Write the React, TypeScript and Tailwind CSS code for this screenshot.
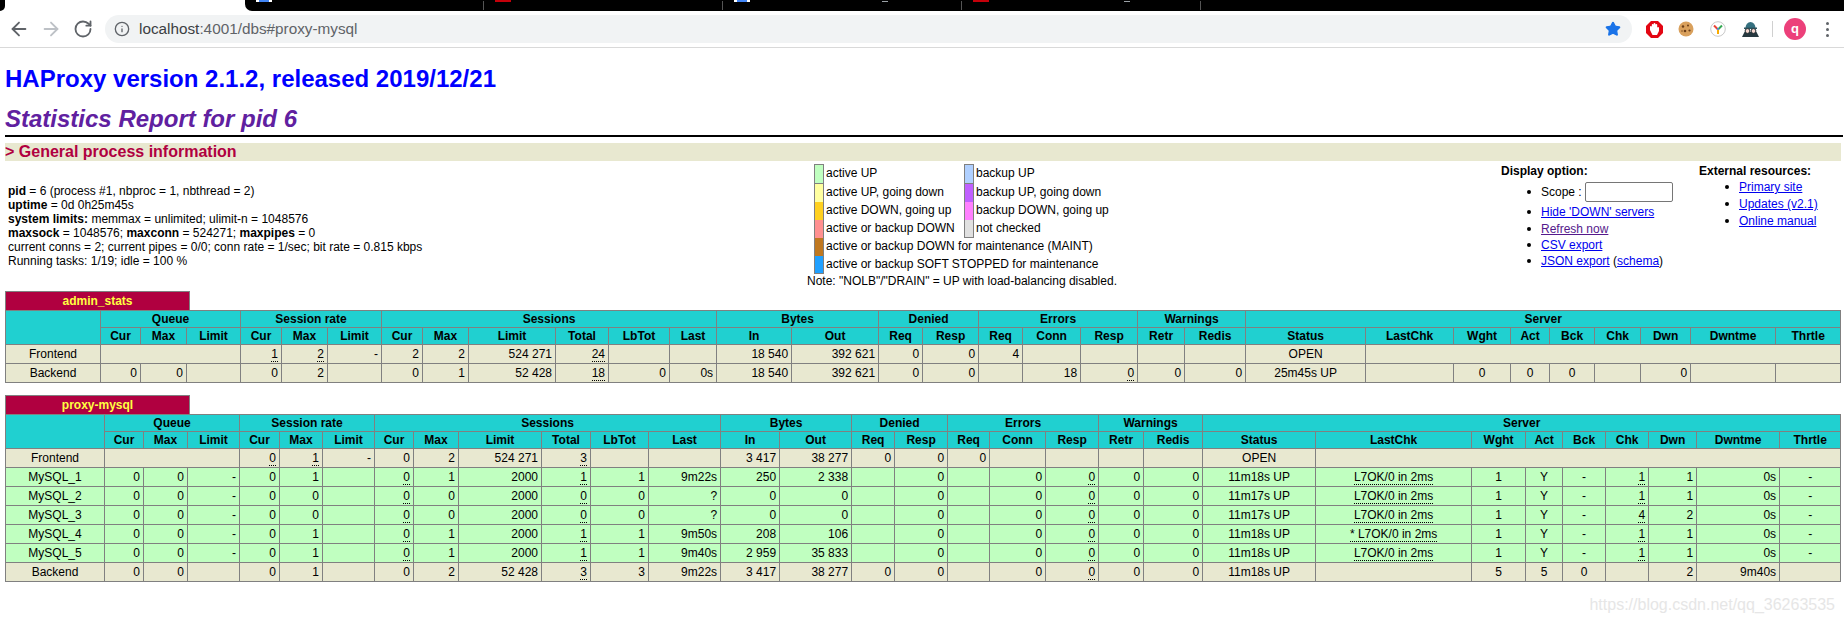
import { RotateCw, ArrowLeft, ArrowRight, Info, Star } from "lucide-react"

const font = "font-['Liberation_Sans',Arial,sans-serif]"

const adminCols = ["w-[95px]","w-[40px]","w-[46px]","w-[54px]","w-[41px]","w-[46px]","w-[54px]","w-[41px]","w-[46px]","w-[87px]","w-[53px]","w-[61px]","w-[47px]","w-[75px]","w-[87px]","w-[44px]","w-[56px]","w-[44px]","w-[58px]","w-[57px]","w-[47px]","w-[61px]","w-[120px]","w-[88px]","w-[57px]","w-[39px]","w-[45px]","w-[46px]","w-[50px]","w-[85px]","w-[65px]"]
const mysqlCols = ["w-[99px]","w-[39px]","w-[44px]","w-[52px]","w-[40px]","w-[43px]","w-[52px]","w-[39px]","w-[45px]","w-[83px]","w-[49px]","w-[58px]","w-[72px]","w-[59px]","w-[72px]","w-[43px]","w-[53px]","w-[42px]","w-[56px]","w-[53px]","w-[45px]","w-[59px]","w-[113px]","w-[156px]","w-[54px]","w-[37px]","w-[43px]","w-[43px]","w-[48px]","w-[83px]","w-[61px]"]

const groups: [string, number][] = [["Queue",3],["Session rate",3],["Sessions",6],["Bytes",2],["Denied",2],["Errors",3],["Warnings",2],["Server",9]]
const subs = ["Cur","Max","Limit","Cur","Max","Limit","Cur","Max","Limit","Total","LbTot","Last","In","Out","Req","Resp","Req","Conn","Resp","Retr","Redis","Status","LastChk","Wght","Act","Bck","Chk","Dwn","Dwntme","Thrtle"]

// cell kinds: "" empty, "~x" dotted tip, "^x" centered, "^~x" centered tip, number = blank colspan
type Cell = string | number

function Td({ v }: { v: Cell }) {
  if (typeof v === "number") return <td colSpan={v} className="border border-[#808080]"></td>
  let s = v
  let center = false
  let tip = false
  if (s.startsWith("^")) { center = true; s = s.slice(1) }
  if (s.startsWith("~")) { tip = true; s = s.slice(1) }
  return (
    <td className={center ? "border border-[#808080] px-[3px] text-center whitespace-nowrap" : "border border-[#808080] px-[3px] text-right whitespace-nowrap"}>
      {tip ? <span className="border-b border-dotted border-black">{s}</span> : s}
    </td>
  )
}

function Row({ cells, green }: { cells: Cell[], green?: boolean }) {
  return (
    <tr className={green ? "h-[19px] bg-[#c0ffc0]" : "h-[19px] bg-[#e8e8d0]"}>
      {cells.map((c, i) => <Td key={i} v={c} />)}
    </tr>
  )
}

function Proxy({ name, cols, rows, className }: { name: string, cols: string[], rows: { cells: Cell[], green?: boolean }[], className: string }) {
  return (
    <div className={className}>
      <div className="w-[185px] h-[19px] bg-[#b00040] border border-b-0 border-[#808080] text-[#ffff40] font-bold text-center text-[12px] leading-[19px]">{name}</div>
      <table className="table-fixed border-collapse w-[1835px] text-[12px] leading-[14px] text-black">
        <colgroup>
          {cols.map((c, i) => <col key={i} className={c} />)}
        </colgroup>
        <thead>
          <tr className="h-[17px] bg-[#20d0d0] font-bold">
            <th rowSpan={2} className="border border-[#808080]"></th>
            {groups.map(([g, n]) => <th key={g} colSpan={n} className="border border-[#808080] text-center">{g}</th>)}
          </tr>
          <tr className="h-[17px] bg-[#20d0d0] font-bold">
            {subs.map((s, i) => <th key={i} className="border border-[#808080] text-center">{s}</th>)}
          </tr>
        </thead>
        <tbody>
          {rows.map((r, i) => <Row key={i} cells={r.cells} green={r.green} />)}
        </tbody>
      </table>
    </div>
  )
}

const adminRows = [
  { cells: ["^Frontend", 3, "~1", "~2", "-", "2", "2", "524 271", "~24", "", "", "18 540", "392 621", "0", "0", "4", "", "", "", "", "^OPEN", 8] },
  { cells: ["^Backend", "0", "0", "", "0", "2", "", "0", "1", "52 428", "~18", "0", "0s", "18 540", "392 621", "0", "0", "", "18", "~0", "0", "0", "^25m45s UP", "", "^0", "^0", "^0", "", "0", "", ""] },
]

function server(name: string, cur: string, lb: string, last: string, inb: string, out: string, status: string, chk: string, dwn: string, star?: boolean) {
  return {
    green: true,
    cells: ["^" + name, "0", "0", "-", "0", cur, "", "~0", cur, "2000", "~" + lb, lb, last, inb, out, "", "0", "", "0", "~0", "0", "0", "^" + status, star ? "^~* L7OK/0 in 2ms" : "^~L7OK/0 in 2ms", "^1", "^Y", "^-", "~" + chk, dwn, "0s", "^-"] as Cell[],
  }
}

const mysqlRows = [
  { cells: ["^Frontend", 3, "~0", "~1", "-", "0", "2", "524 271", "~3", "", "", "3 417", "38 277", "0", "0", "0", "", "", "", "", "^OPEN", 8] },
  server("MySQL_1", "1", "1", "9m22s", "250", "2 338", "11m18s UP", "1", "1"),
  server("MySQL_2", "0", "0", "?", "0", "0", "11m17s UP", "1", "1"),
  server("MySQL_3", "0", "0", "?", "0", "0", "11m17s UP", "4", "2"),
  server("MySQL_4", "1", "1", "9m50s", "208", "106", "11m18s UP", "1", "1", true),
  server("MySQL_5", "1", "1", "9m40s", "2 959", "35 833", "11m18s UP", "1", "1"),
  { cells: ["^Backend", "0", "0", "", "0", "1", "", "0", "2", "52 428", "~3", "3", "9m22s", "3 417", "38 277", "0", "0", "", "0", "~0", "0", "0", "^11m18s UP", "", "^5", "^5", "^0", "", "2", "9m40s", ""] },
]

function Swatch({ color, label }: { color: string, label: string }) {
  return (
    <div className="flex h-[18px] items-center">
      <div className={color}></div>
      <span className="ml-[2px] pb-[2px]">{label}</span>
    </div>
  )
}

function Legend() {
  return (
    <div className="ml-[799px] mt-[3px] w-[310px] text-[12px] leading-[14px] whitespace-nowrap">
      <div className="flex ml-[7px]">
        <div className="w-[150px]">
          <div className="flex h-[20px] items-center">
            <div className="w-[10px] h-[20px] bg-[#c0ffc0] border border-[#808080]"></div><span className="ml-[2px] pb-[2px]">active UP</span>
          </div>
          <Swatch color="w-[10px] h-[18px] bg-[#ffffa0] border-x border-[#808080]" label="active UP, going down" />
          <Swatch color="w-[10px] h-[18px] bg-[#ffd020] border-x border-[#808080]" label="active DOWN, going up" />
          <Swatch color="w-[10px] h-[18px] bg-[#ff9090] border-x border-[#808080]" label="active or backup DOWN" />
        </div>
        <div>
          <div className="flex h-[20px] items-center">
            <div className="w-[10px] h-[20px] bg-[#b0d0ff] border border-[#808080]"></div><span className="ml-[2px] pb-[2px]">backup UP</span>
          </div>
          <Swatch color="w-[10px] h-[18px] bg-[#c060ff] border-x border-[#808080]" label="backup UP, going down" />
          <Swatch color="w-[10px] h-[18px] bg-[#ff80ff] border-x border-[#808080]" label="backup DOWN, going up" />
          <Swatch color="w-[10px] h-[18px] bg-[#e0e0e0] border-x border-b border-[#808080]" label="not checked" />
        </div>
      </div>
      <div className="ml-[7px]">
        <Swatch color="w-[10px] h-[18px] bg-[#c07820] border-x border-[#808080]" label="active or backup DOWN for maintenance (MAINT)" />
        <Swatch color="w-[10px] h-[18px] bg-[#20a0ff] border-x border-b border-[#808080]" label="active or backup SOFT STOPPED for maintenance" />
      </div>
      <div>Note: "NOLB"/"DRAIN" = UP with load-balancing disabled.</div>
    </div>
  )
}

function Bullet({ children, className }: { children: React.ReactNode, className: string }) {
  return (
    <div className={className}>
      <span className="w-[4px] h-[4px] rounded-full bg-black mr-[10px] shrink-0"></span>
      <div className="whitespace-nowrap">{children}</div>
    </div>
  )
}

const link = "text-[#0000ee] underline"

function Toolbar() {
  return (
    <>
      <div className="h-[11px] bg-white flex overflow-hidden">
        <div className="w-[5px] bg-black rounded-br-[6px]"></div>
        <div className="ml-[240px] flex-1 flex bg-black rounded-bl-[7px]">
          <div className="ml-[11px] w-[16px] h-[2px] bg-white"><div className="ml-[3px] w-[10px] h-[2px] bg-[#4285f4]"></div></div>
          <div className="ml-[211px] mt-[1px] w-px h-[9px] bg-[#555]"></div>
          <div className="ml-[11px] w-[16px] h-[2px] bg-[#c4000a]"></div>
          <div className="ml-[211px] mt-[1px] w-px h-[9px] bg-[#555]"></div>
          <div className="ml-[11px] w-[16px] h-[2px] bg-white"><div className="ml-[3px] w-[10px] h-[2px] bg-[#4285f4]"></div></div>
          <div className="ml-[132px] mt-[1px] w-[6px] h-px bg-[#9aa0a6]"></div>
          <div className="ml-[73px] mt-[1px] w-px h-[9px] bg-[#555]"></div>
          <div className="ml-[11px] w-[16px] h-[2px] bg-[#c4000a]"></div>
          <div className="ml-[135px] mt-[1px] w-[6px] h-px bg-[#9aa0a6]"></div>
          <div className="ml-[70px] mt-[1px] w-px h-[9px] bg-[#555]"></div>
        </div>
      </div>
      <div className="h-[37px] bg-white border-b border-[#d9d9d9] flex items-center">
        <ArrowLeft className="ml-[8px] w-[22px] h-[22px] text-[#5f6368]" strokeWidth={2} />
        <ArrowRight className="ml-[10px] w-[22px] h-[22px] text-[#bdc1c6]" strokeWidth={2} />
        <RotateCw className="ml-[11px] w-[20px] h-[20px] text-[#5f6368]" strokeWidth={2.2} />
        <div className="ml-[12px] w-[1527px] h-[28px] rounded-full bg-[#f1f3f4] flex items-center">
          <Info className="ml-[9px] w-[16px] h-[16px] text-[#5f6368]" strokeWidth={2} />
          <div className="ml-[9px] text-[15.3px] text-[#5f6368]"><span className="text-[#3c4043]">localhost</span>:4001/dbs#proxy-mysql</div>
          <Star className="ml-auto mr-[11px] w-[16px] h-[16px] text-[#1a73e8] fill-[#1a73e8]" />
        </div>
        <svg className="ml-[14px]" width="17" height="17" viewBox="0 0 17 17">
          <path d="M5 0h7l5 5v7l-5 5H5l-5-5V5z" fill="#e30613" />
          <path d="M4 9V6a.9.9 0 011.800 0V3.800a.9.9 0 011.800 0V3a.9.9 0 011.800 0v.8a.9.9 0 011.800 0V7a.9.9 0 011.800 0v3l-2 4H6.500z" fill="#fff" />
        </svg>
        <svg className="ml-[15px]" width="16" height="16" viewBox="0 0 16 16">
          <circle cx="8" cy="8" r="7.500" fill="#d9a05c" />
          <circle cx="5" cy="5.500" r="1.200" fill="#6b3d17" />
          <circle cx="10" cy="4.500" r="1" fill="#6b3d17" />
          <circle cx="7" cy="10" r="1.300" fill="#6b3d17" />
          <circle cx="11.500" cy="9.500" r="1.100" fill="#6b3d17" />
          <circle cx="4" cy="10" r=".7" fill="#6b3d17" />
        </svg>
        <svg className="ml-[16px]" width="16" height="16" viewBox="0 0 16 16">
          <circle cx="8" cy="8" r="7.300" fill="#fff" stroke="#c8c8c8" />
          <path d="M8 8.500L4 4.500" stroke="#ea4335" strokeWidth="2" />
          <path d="M8 8.500l4-4" stroke="#34a853" strokeWidth="2" />
          <path d="M8 8v5" stroke="#f9ab00" strokeWidth="2" />
          <circle cx="8" cy="8" r="1" fill="#4285f4" />
        </svg>
        <svg className="ml-[16px]" width="17" height="16" viewBox="0 0 17 16">
          <path d="M3.500 7a5 6 0 0110 0z" fill="#35707f" />
          <rect x="2" y="6.500" width="13" height="1.500" fill="#2a5663" />
          <path d="M0 16l2.500-5h12l2.500 5z" fill="#26383f" />
          <circle cx="5.500" cy="10" r="2.400" fill="#f6d7cf" stroke="#1d2b30" />
          <circle cx="11.500" cy="10" r="2.400" fill="#f6d7cf" stroke="#1d2b30" />
        </svg>
        <div className="ml-[13px] w-px h-[16px] bg-[#d0d0d0]"></div>
        <div className="ml-[11px] w-[22px] h-[22px] rounded-full bg-[#ec407a] text-white text-[13px] font-bold flex items-center justify-center leading-none pb-[2px]">q</div>
        <div className="ml-[20px] flex flex-col gap-[3px]">
          <div className="w-[3px] h-[3px] rounded-full bg-[#5f6368]"></div>
          <div className="w-[3px] h-[3px] rounded-full bg-[#5f6368]"></div>
          <div className="w-[3px] h-[3px] rounded-full bg-[#5f6368]"></div>
        </div>
      </div>
    </>
  )
}

function App() {
  return (
    <div className={`${font} w-[1844px] h-[621px] overflow-hidden bg-white text-black flex flex-col`}>
      <Toolbar />

      <div className="ml-[5px] mt-[17px] text-[24px] leading-[28px] font-bold text-[#0000ff]">HAProxy version 2.1.2, released 2019/12/21</div>
      <div className="ml-[5px] mt-[12px] text-[24px] leading-[28px] font-bold italic text-[#6020a0]">Statistics Report for pid 6</div>
      <div className="ml-[5px] mt-[2px] w-[1838px] h-[2px] bg-black"></div>
      <div className="ml-[5px] mt-[6px] w-[1836px] h-[18px] bg-[#e8e8d0] text-[#b00040] font-bold text-[16px] leading-[18px]">&gt; General process information</div>

      <div className="flex h-[130px] text-[12px] leading-[14px]">
        <div className="ml-[8px] mt-[23px] w-0 whitespace-nowrap">
          <div><b>pid</b> = 6 (process #1, nbproc = 1, nbthread = 2)</div>
          <div><b>uptime</b> = 0d 0h25m45s</div>
          <div><b>system limits:</b> memmax = unlimited; ulimit-n = 1048576</div>
          <div><b>maxsock</b> = 1048576; <b>maxconn</b> = 524271; <b>maxpipes</b> = 0</div>
          <div>current conns = 2; current pipes = 0/0; conn rate = 1/sec; bit rate = 0.815 kbps</div>
          <div>Running tasks: 1/19; idle = 100 %</div>
        </div>
        <Legend />
        <div className="ml-[384px] mt-[3px] w-[198px]">
          <div className="font-bold">Display option:</div>
          <Bullet className="ml-[26px] mt-[4px] h-[20px] flex items-center">
            <div className="flex items-center">Scope :<div className="ml-[3px] w-[88px] h-[20px] bg-white border border-[#767676] rounded-[2px]"></div></div>
          </Bullet>
          <Bullet className="ml-[26px] mt-[2px] h-[16px] flex items-center"><span className={link}>Hide 'DOWN' servers</span></Bullet>
          <Bullet className="ml-[26px] mt-[1px] h-[16px] flex items-center"><span className="text-[#551a8b] underline">Refresh now</span></Bullet>
          <Bullet className="ml-[26px] h-[16px] flex items-center"><span className={link}>CSV export</span></Bullet>
          <Bullet className="ml-[26px] h-[16px] flex items-center"><span><span className={link}>JSON export</span> (<span className={link}>schema</span>)</span></Bullet>
        </div>
        <div className="mt-[3px]">
          <div className="font-bold">External resources:</div>
          <Bullet className="ml-[26px] mt-[1px] h-[16px] flex items-center"><span className={link}>Primary site</span></Bullet>
          <Bullet className="ml-[26px] mt-[1px] h-[16px] flex items-center"><span className={link}>Updates (v2.1)</span></Bullet>
          <Bullet className="ml-[26px] mt-[1px] h-[16px] flex items-center"><span className={link}>Online manual</span></Bullet>
        </div>
      </div>

      <Proxy name="admin_stats" cols={adminCols} rows={adminRows} className="ml-[5px]" />
      <Proxy name="proxy-mysql" cols={mysqlCols} rows={mysqlRows} className="ml-[5px] mt-[12px]" />

      <div className="mt-[13px] mr-[9px] text-right text-[16px] leading-[20px] text-[#e6e6e6]">https://blog.csdn.net/qq_36263535</div>
    </div>
  )
}

export default App
